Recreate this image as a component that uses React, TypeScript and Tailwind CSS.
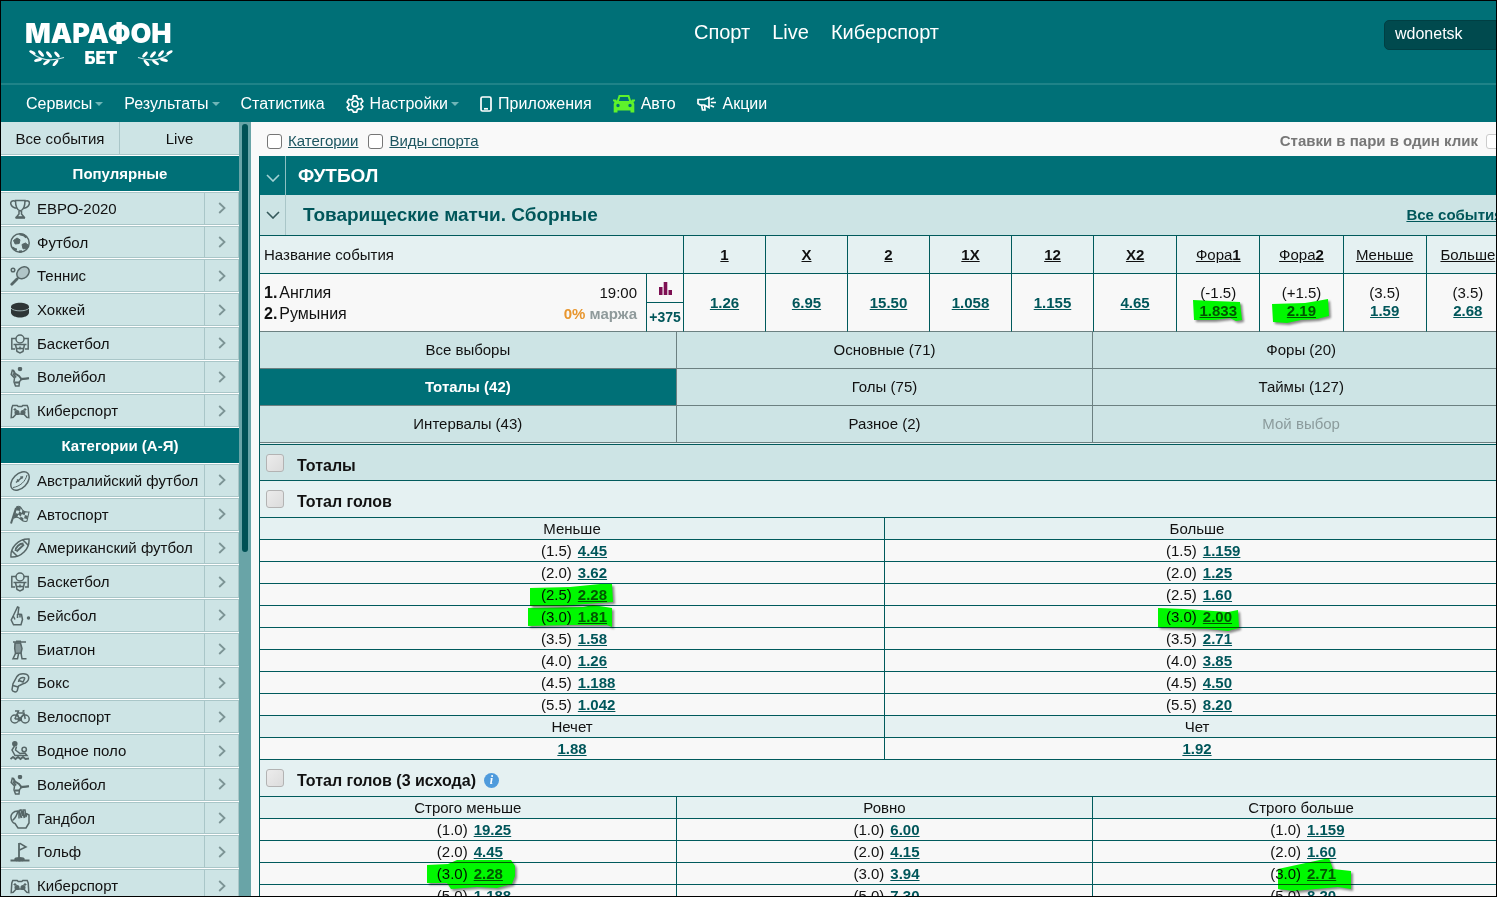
import { useState, type ReactNode } from 'react';
import clsx from 'clsx';

/* ---------- Data ---------- */

const TOP_LINKS = ['Спорт', 'Live', 'Киберспорт'];

const POPULAR = [
  { icon: 'cup', label: 'ЕВРО-2020' },
  { icon: 'football', label: 'Футбол' },
  { icon: 'tennis', label: 'Теннис' },
  { icon: 'puck', label: 'Хоккей' },
  { icon: 'basketball', label: 'Баскетбол' },
  { icon: 'volleyball', label: 'Волейбол' },
  { icon: 'gamepad', label: 'Киберспорт' },
];

const CATEGORIES = [
  { icon: 'rugby', label: 'Австралийский футбол' },
  { icon: 'flag', label: 'Автоспорт' },
  { icon: 'american', label: 'Американский футбол' },
  { icon: 'basketball', label: 'Баскетбол' },
  { icon: 'baseball', label: 'Бейсбол' },
  { icon: 'biathlon', label: 'Биатлон' },
  { icon: 'boxing', label: 'Бокс' },
  { icon: 'bike', label: 'Велоспорт' },
  { icon: 'waterpolo', label: 'Водное поло' },
  { icon: 'volleyball', label: 'Волейбол' },
  { icon: 'handball', label: 'Гандбол' },
  { icon: 'golf', label: 'Гольф' },
  { icon: 'gamepad', label: 'Киберспорт' },
];

const MARKET_TABS = [
  'Все выборы',
  'Основные (71)',
  'Форы (20)',
  'Тоталы (42)',
  'Голы (75)',
  'Таймы (127)',
  'Интервалы (43)',
  'Разное (2)',
  'Мой выбор',
];

type Odd = { handicap?: string; value: string; mark?: string };

// mark = outline of the marker stroke, drawn over the value
const EVENT_ODDS: Odd[] = [
  { value: '1.26' },
  { value: '6.95' },
  { value: '15.50' },
  { value: '1.058' },
  { value: '1.155' },
  { value: '4.65' },
  { handicap: '(-1.5)', value: '1.833', mark: '9,6 30,7 56,8 58,26 52,27 46,24 30,26 10,26' },
  { handicap: '(+1.5)', value: '2.19', mark: '1,10 34,9 46,7 57,5 58,22 46,25 30,26 16,29 2,28' },
  { handicap: '(3.5)', value: '1.59' },
  { handicap: '(3.5)', value: '2.68' },
];

const TOTALS: Odd[][] = [
  [{ handicap: '(1.5)', value: '4.45' }, { handicap: '(1.5)', value: '1.159' }],
  [{ handicap: '(2.0)', value: '3.62' }, { handicap: '(2.0)', value: '1.25' }],
  [
    { handicap: '(2.5)', value: '2.28', mark: '5,11 45,10 75,7 87,7 88,25 60,27 37,29 5,29' },
    { handicap: '(2.5)', value: '1.60' },
  ],
  [
    { handicap: '(3.0)', value: '1.81', mark: '3,9 58,8 68,6 87,9 87,28 82,26 45,26 3,27' },
    { handicap: '(3.0)', value: '2.00', mark: '8,9 34,10 78,13 88,11 89,29 78,32 58,30 8,28' },
  ],
  [{ handicap: '(3.5)', value: '1.58' }, { handicap: '(3.5)', value: '2.71' }],
  [{ handicap: '(4.0)', value: '1.26' }, { handicap: '(4.0)', value: '3.85' }],
  [{ handicap: '(4.5)', value: '1.188' }, { handicap: '(4.5)', value: '4.50' }],
  [{ handicap: '(5.5)', value: '1.042' }, { handicap: '(5.5)', value: '8.20' }],
];

const TOTALS_3WAY: Odd[][] = [
  [
    { handicap: '(1.0)', value: '19.25' },
    { handicap: '(1.0)', value: '6.00' },
    { handicap: '(1.0)', value: '1.159' },
  ],
  [
    { handicap: '(2.0)', value: '4.45' },
    { handicap: '(2.0)', value: '4.15' },
    { handicap: '(2.0)', value: '1.60' },
  ],
  [
    { handicap: '(3.0)', value: '2.28', mark: '6,9 27,8 36,4 90,4 94,10 94,20 91,28 76,32 56,31 30,33 26,27 6,27' },
    { handicap: '(3.0)', value: '3.94' },
    { handicap: '(3.0)', value: '2.71', mark: '24,13 47,8 75,2 79,13 97,15 97,33 84,31 40,35 24,33' },
  ],
  [
    { handicap: '(5.0)', value: '1.188' },
    { handicap: '(5.0)', value: '7.30' },
    { handicap: '(5.0)', value: '8.20' },
  ],
];

/* ---------- Icons ---------- */

const SPORT_ICONS: Record<string, ReactNode> = {
  cup: (
    <>
      <path d="M5.500 1.500h9.500c0 6-1.500 9.500-4.800 10.500C6.800 11 5.500 7.500 5.500 1.500z" />
      <path d="M5.500 2.200C2 .8.2 3 .9 5.200c.8 2.600 3 3.600 5.700 4M15 2.200c3.500-1.400 4.900.8 4.200 3-.8 2.600-3 3.600-5.400 4" />
      <path d="M9 12v3l-2.500 3h7.500L11.500 15v-3" />
      <path d="M5.500 18.800h9.500" strokeWidth="2" />
    </>
  ),
  football: (
    <>
      <circle cx="10" cy="10" r="9.200" />
      <path d="M3.500 7.500L7 5l3 1.800-.8 3.700-4 .5zM12 11.500l3.500-1.500 2.500 2-1.200 3.500-3.800.3z" fill="currentColor" strokeWidth="1" />
      <path d="M9.500 1.500c3-.2 5.500 1 7 3M2.500 14.500c1.500 1.500 3 2 4.500 2M9 18.500l3-.2" strokeWidth="2.200" />
    </>
  ),
  tennis: (
    <>
      <ellipse cx="13" cy="6.800" rx="6.800" ry="5.300" transform="rotate(-42 13 6.800)" fill="#b0c5c7" />
      <path d="M8.500 11.500l-2 2" />
      <path d="M7 13L1.800 18.200" strokeWidth="2.800" strokeLinecap="round" />
      <circle cx="3" cy="4" r="1.800" />
    </>
  ),
  puck: (
    <g fill="#2e3536" stroke="none">
      <path d="M1 6.500c1.500-5 16.500-5 18 0V13c-1.500 6-16.500 6-18 0z" />
      <path d="M1 8c2 3.800 16 3.800 18 0" fill="none" stroke="#9db0b2" strokeWidth="1" />
    </g>
  ),
  basketball: (
    <>
      <path d="M6 4.500H1.800v10.500H5M14 4.500h4.200v10.500H15" />
      <circle cx="10" cy="5" r="4" />
      <path d="M3.500 10.500h13M5.500 10.500l1.500 7 3 1.500 3-1.500 1.500-7M6.500 14.500h7M10 12.500v3" />
    </>
  ),
  volleyball: (
    <>
      <circle cx="10" cy="2" r="1.500" fill="currentColor" />
      <path d="M2.500 2.500L1.200 7.500 4.500 11 4 15l1.500 4h3.500l.5-4.500 2-2 7.500-1.200" />
      <path d="M3 3l2 3.500L9 9l2 2.500" strokeWidth="2" />
      <path d="M3 6.500l3 4M5 15.500h4M10 12l9-.8" strokeWidth="2" />
    </>
  ),
  gamepad: (
    <>
      <path d="M2.800 4.500h4.400l1 1h3.600l1-1h4.400l1 2.500.6 9.500-2-.3-3-3.200H6.200l-3 3.200-2 .3L1.800 7z" />
      <circle cx="7" cy="11.500" r="1.800" fill="currentColor" />
      <circle cx="13" cy="11.500" r="1.800" fill="currentColor" />
      <path d="M3.500 8.500h3M5 7v3M13.500 8.500h3M15 7v3" strokeWidth="1.100" />
    </>
  ),
  rugby: (
    <>
      <ellipse cx="10" cy="10" rx="11" ry="7" transform="rotate(-45 10 10)" />
      <path d="M6 11.500L13 5.500M7 8.500l2 2M10.500 5.500l2 2" />
      <path d="M3 16.500C10 15.500 15.500 10.500 17 4" strokeWidth="1" />
    </>
  ),
  flag: (
    <>
      <path d="M6 3L1 18.500" strokeWidth="2" />
      <path d="M6.500 2c3-2 4.500.5 6 3s4 2 6.500 2l-2 9c-3 1.500-5-.5-6.500-2S7 11.500 4 13z" strokeWidth="1.100" />
      <g fill="currentColor" stroke="none">
        <path d="M7 1.500l4 1-1 3.500-4-.8zM12.500 5.500l3 1.800-1 3-3.200-1.500zM9.500 6l2.500 2.500-1.200 3L8 9.500zM5.500 8l3 1-1.200 3.200-3 .3zM15 10l3 1-1 3-3-.8zM10.500 11.500l3 1.800L13 16l-3-2.500z" />
      </g>
    </>
  ),
  american: (
    <>
      <path d="M1 19C0 10 8 .5 19 1c.8 10-8 18.500-18 18z" />
      <path d="M1.500 12.500l6 6M12.500 1.500l6 6" />
      <path d="M5.500 13c0-4 4-7.500 8-7.500M6.500 13.500L14 6.500" strokeWidth="1.800" />
    </>
  ),
  baseball: (
    <>
      <path d="M3.500 18.800L1.200 14l2-4L7.500 1l1.300.5-.8 6.500 3.500.5 1 5-1.500 5.300z" />
      <path d="M3.200 10l1.800 3.500M7.500 8v4M10 8.500v3" />
      <circle cx="18.500" cy="12" r="1" fill="currentColor" />
    </>
  ),
  biathlon: (
    <>
      <path d="M3 2h13M6 1.200h5" />
      <path d="M5 3h5.500l1.500 5.500-1 4.500-5.500.5-.8-5z" fill="currentColor" fillOpacity=".6" />
      <path d="M5.500 13.500L3 18.800h4.500l1-5M11 13l1 5.800h4.500" />
    </>
  ),
  boxing: (
    <>
      <path d="M8.500 13l-1.200 4.500c-1 2.300-5 1.500-5.300-.8l1-6 4-7.200C9.500-.2 17 0 18.500 3.500c1 4-2.500 7-6 7.500z" />
      <path d="M15 5c-3-1.500-6.500.8-6.500 4M9 7.500l4 1.500 2-4M3 12.500l5 1.500" />
    </>
  ),
  bike: (
    <>
      <circle cx="4.800" cy="12" r="4" />
      <circle cx="15.200" cy="12" r="4" />
      <path d="M4.800 12L7.500 6h6.500l1.200 6M7 6.500l2.500 5.500L14 7M9.500 12H4.800M5 4h3.500l-.8 2M12.500 4.500l2-1" />
      <circle cx="9.500" cy="12.500" r="1.200" fill="currentColor" />
    </>
  ),
  waterpolo: (
    <>
      <circle cx="4.800" cy="2.800" r="2" fill="currentColor" />
      <path d="M4.500 5L2 9l3 5.500h12l-2-2.500-5 .5L5.500 9l1-3.500" />
      <circle cx="14.200" cy="8.500" r="2.200" />
      <path d="M.5 18l2.500-2 2.500 2L8 16l2.500 2 2.500-2 2.500 2 3.500-.5" strokeWidth="1.800" />
    </>
  ),
  handball: (
    <>
      <path d="M8 2C3 2 .5 5.500 1 9c.4 3 2 5 4 5.500l3 4.500h8l3-5V6l-2-1" />
      <path d="M8 2C7 6 5 9.500 2.500 11.500M9 9.500V1.500l2-.7 1.500 6.200.5-6h2l1 7 .8-4" />
      <path d="M9 2l2.500 7M13 2l1.500 7" strokeWidth="2" />
    </>
  ),
  golf: (
    <>
      <path d="M9 1v16" strokeWidth="1.800" />
      <path d="M9.500 1.200L16 5l-6.500 3" />
      <path d="M.5 18.500h6l3-1.500 3 1.500h7" strokeWidth="1.800" />
      <ellipse cx="9.500" cy="17.300" rx="4.500" ry="1.600" fill="currentColor" />
    </>
  ),
};

function SportIcon({ name }: { name: string }) {
  return (
    <svg viewBox="0 0 20 20" className="size-5 shrink-0 text-[#566667]" fill="none" stroke="currentColor" strokeWidth="1.5" aria-hidden="true">
      {SPORT_ICONS[name]}
    </svg>
  );
}

function Caret() {
  return (
    <svg viewBox="0 0 8 4" className="ml-[3px] h-1 w-2" aria-hidden="true">
      <path d="M0 0h8L4 4z" fill="#6fb5b7" />
    </svg>
  );
}

function Laurel({ flip }: { flip?: boolean }) {
  return (
    <svg viewBox="0 0 36 16" className={clsx('h-4 w-9', flip && '-scale-x-100')} aria-hidden="true">
      <path d="M4 4C12 10 22 12 35 7.500" fill="none" stroke="#cfe9ea" strokeWidth="1.200" />
      <g fill="#fff">
        <ellipse cx="3.500" cy="2.500" rx="3.500" ry="1.400" transform="rotate(30 3.500 2.500)" />
        <ellipse cx="12" cy="3.500" rx="4" ry="1.600" transform="rotate(50 12 3.500)" />
        <ellipse cx="20" cy="4.500" rx="4" ry="1.600" transform="rotate(50 20 4.500)" />
        <ellipse cx="28" cy="4.500" rx="3.700" ry="1.500" transform="rotate(50 28 4.500)" />
        <ellipse cx="9" cy="10" rx="4" ry="1.600" transform="rotate(-15 9 10)" />
        <ellipse cx="17.500" cy="12.500" rx="4" ry="1.600" transform="rotate(-35 17.500 12.500)" />
        <ellipse cx="26.500" cy="13" rx="4" ry="1.500" transform="rotate(-50 26.500 13)" />
      </g>
    </svg>
  );
}

function ChevronDown({ className }: { className: string }) {
  return (
    <svg viewBox="0 0 14 8" className={clsx('h-2 w-3.5', className)} fill="none" stroke="currentColor" strokeWidth="1.6" aria-hidden="true">
      <path d="M1 1l6 6 6-6" />
    </svg>
  );
}

/* ---------- Header ---------- */

function Header() {
  return (
    <header className="shrink-0 bg-[#007077] text-white">
      <div className="flex h-[82px] items-start overflow-hidden">
        <a href="#" className="flex w-[248px] shrink-0 flex-col pt-[17px] pl-6">
          <span className="font-[Inter,sans-serif] text-[27px] leading-8 font-black">МАРАФОН</span>
          <span className="flex w-[152px] items-center justify-between px-1">
            <Laurel />
            <span className="font-[Inter,sans-serif] text-[17px] leading-4 font-black">БЕТ</span>
            <Laurel flip />
          </span>
        </a>
        <nav className="flex flex-1 justify-center gap-[22px] pt-[17px] text-xl leading-7">
          {TOP_LINKS.map(link => (
            <a key={link} href="#">{link}</a>
          ))}
        </nav>
        <button className="mt-[19px] -mr-1 h-[30px] w-[116px] rounded-[5px] border border-[#003f43] bg-[#004a4e] pb-0.5 pl-2.5 text-left text-base">
          wdonetsk
        </button>
      </div>
      <nav className="flex h-[39px] items-center gap-[21px] border-t-2 border-[#1f8388] pl-[25px] text-base whitespace-nowrap">
        <a href="#" className="flex items-center">Сервисы<Caret /></a>
        <a href="#" className="flex items-center">Результаты<Caret /></a>
        <a href="#">Статистика</a>
        <a href="#" className="flex items-center">
          <svg viewBox="0 0 24 24" className="mr-1.5 size-[18px]" fill="none" stroke="currentColor" strokeWidth="2.2" strokeLinejoin="round" aria-hidden="true">
            <path d="M9.700 2h4.600l.7 3.200 2 1.200 3.200-1 2.300 4-2.400 2.200v2.400l2.400 2.200-2.300 4-3.200-1-2 1.200-.7 3.200H9.700L9 21.400l-2-1.200-3.200 1-2.300-4L3.900 15v-2.400L1.500 10.400l2.300-4 3.200 1 2-1.200z" transform="translate(0 -.8)" />
            <circle cx="12" cy="12" r="4" />
          </svg>
          Настройки<Caret />
        </a>
        <a href="#" className="flex items-center">
          <svg viewBox="0 0 12 16" className="mr-1.5 h-4 w-3" fill="none" stroke="currentColor" strokeWidth="1.700" aria-hidden="true">
            <rect x="1" y="1" width="10" height="14" rx="1.500" />
            <path d="M4 12.800h4" />
          </svg>
          Приложения
        </a>
        <a href="#" className="flex items-center">
          <svg viewBox="0 0 22 20" className="mr-1.5 h-5 w-[22px] text-[#5ef22b]" aria-hidden="true">
            <path d="M4.500 8l2-6h9l2 6" fill="none" stroke="currentColor" strokeWidth="2" />
            <path fill="currentColor" fillRule="evenodd" d="M0 5.500h3l1 1.500h14l1-1.500h3v1.500l-1.500 1 .8 2v8.500h-3.800V16.500h-13v2H.7V10l.8-2L0 7zM5 9.800a1.700 1.700 0 100 3.400 1.700 1.700 0 000-3.400zm12 0a1.700 1.700 0 100 3.400 1.700 1.700 0 000-3.400z" />
          </svg>
          Авто
        </a>
        <a href="#" className="flex items-center">
          <svg viewBox="0 0 20 16" className="mr-1.5 h-4 w-5" fill="none" stroke="currentColor" strokeWidth="1.700" aria-hidden="true">
            <path d="M1 3.500h6.500L12 1.500v10L7.500 9H3L1 7.500zM4.500 9l1 5h2.500L7.500 9" />
            <path d="M14 6.500h5M13.500 3.500l3.500-1.500M13.500 9.500L17 11" />
          </svg>
          Акции
        </a>
      </nav>
    </header>
  );
}

/* ---------- Sidebar ---------- */

function SportList({ items, className }: { items: { icon: string; label: string }[]; className: string }) {
  return (
    <ul className={clsx('flex flex-col', className)}>
      {items.map(item => (
        <li key={item.label} className="flex-1 border-b border-white">
          <a href="#" className="flex h-full items-stretch border-y border-[#a9c6c8] bg-[#cde4e5]">
            <span className="flex flex-1 items-center gap-[7px] pt-px pl-[9px] whitespace-nowrap">
              <SportIcon name={item.icon} />
              {item.label}
            </span>
            <span className="flex w-[35px] items-center justify-center border-x border-[#a9c6c8]">
              <svg viewBox="0 0 8 12" className="h-3 w-2" fill="none" stroke="#7c9495" strokeWidth="1.800" aria-hidden="true">
                <path d="M1.200 1l5.300 5-5.300 5" />
              </svg>
            </span>
          </a>
        </li>
      ))}
    </ul>
  );
}

function Sidebar() {
  return (
    <aside className="flex w-[250px] shrink-0 overflow-hidden">
      <div className="flex-1 bg-white">
        <div className="grid h-[33px] grid-cols-2 border-b border-[#a9c6c8] bg-[#cde4e5]">
          <button className="border-r border-[#a9c6c8] pt-0.5">Все события</button>
          <button className="pt-0.5">Live</button>
        </div>
        <h2 className="mt-px mb-px flex h-[35px] items-center justify-center bg-[#007077] font-bold text-white">Популярные</h2>
        <SportList items={POPULAR} className="h-[236px]" />
        <h2 className="mb-px flex h-[35px] items-center justify-center bg-[#007077] font-bold text-white">Категории (А-Я)</h2>
        <SportList items={CATEGORIES} className="h-[439px]" />
      </div>
      {/* scroll track */}
      <div className="w-3 bg-[#69a4a7] px-[3px] pt-0.5">
        <div className="h-[428px] rounded-full bg-[#005155]" />
      </div>
    </aside>
  );
}

/* ---------- Markets ---------- */

function Marker({ points }: { points: string }) {
  return (
    <svg viewBox="0 0 100 36" className="pointer-events-none absolute -top-2 -left-4 h-9 w-[100px] max-w-none overflow-visible mix-blend-multiply drop-shadow-[2px_2px_1px_rgba(0,0,0,0.45)]" aria-hidden="true">
      <polygon points={points} fill="#00ff00" />
    </svg>
  );
}

function OddLink({ value }: { value: string }) {
  return <a href="#" className="font-bold text-[#00565a] underline underline-offset-1">{value}</a>;
}

function BigCheckbox({ label, children }: { label: string; children?: ReactNode }) {
  return (
    <div className="flex h-full items-center">
      <label className="flex items-center gap-[13px] pl-1.5 text-base font-bold">
        <input type="checkbox" className="size-[18px] appearance-none rounded-[3px] border border-[#b3b3b3] bg-linear-to-br from-[#ececec] to-[#dcdcdc]" />
        <span className="pt-1.5">{label}</span>
      </label>
      {children}
    </div>
  );
}

function MarketHead({ titles }: { titles: string[] }) {
  return (
    <tr className="h-[22px]">
      {titles.map(title => (
        <th key={title} className="border-r border-b border-[#005a5c] bg-[#e5f1f2] p-0 font-normal">{title}</th>
      ))}
    </tr>
  );
}

function MarketRows({ rows }: { rows: Odd[][] }) {
  return rows.map((row, i) => (
    <tr key={i} className="h-[22px]">
      {row.map((odd, j) => (
        <td key={j} className="border-r border-b border-[#005a5c] bg-[#f8f8f8] p-0">
          <div className="relative mx-auto flex w-[62px] gap-[6px] whitespace-nowrap">
            <span>{odd.handicap}</span>
            <OddLink value={odd.value} />
            {odd.mark && <Marker points={odd.mark} />}
          </div>
        </td>
      ))}
    </tr>
  ));
}

function EventTable() {
  const head = 'border-r border-b border-[#005a5c] bg-[#e5f1f2] p-0';
  const cell = 'border-r border-b border-r-[#005a5c] border-b-[#6c8081] bg-[#f8f8f8] p-0';
  return (
    <table className="w-full table-fixed border-separate border-spacing-0 text-center">
      <colgroup>
        <col className="w-[387px]" />
        <col className="w-[37px]" />
        <col span={5} className="w-[82px]" />
        <col span={5} />
      </colgroup>
      <thead>
        <tr className="h-[38px]">
          <th colSpan={2} className={clsx(head, 'pl-1 text-left font-normal')}>Название события</th>
          {['1', 'X', '2', '1X', '12', 'X2'].map(name => (
            <th key={name} className={head}><a href="#" className="underline underline-offset-1">{name}</a></th>
          ))}
          {['1', '2'].map(n => (
            <th key={n} className={clsx(head, 'font-normal')}>
              <a href="#" className="underline underline-offset-1">Фора<b>{n}</b></a>
            </th>
          ))}
          {['Меньше', 'Больше'].map(name => (
            <th key={name} className={clsx(head, 'font-normal')}><a href="#" className="underline underline-offset-1">{name}</a></th>
          ))}
        </tr>
      </thead>
      <tbody>
        <tr className="h-[58px]">
          <td className={clsx(cell, 'pr-[9px] pl-1')}>
            <div className="flex justify-between leading-[21px]">
              <div className="text-left text-base leading-[21px]">
                <div className="flex gap-0.5"><b>1.</b><span>Англия</span></div>
                <div className="flex gap-0.5"><b>2.</b><span>Румыния</span></div>
              </div>
              <div className="text-right">
                <div>19:00</div>
                <div className="font-bold text-[#8f9a9b]"><span className="text-[#e8962e]">0%</span> маржа</div>
              </div>
            </div>
          </td>
          <td className={cell}>
            <div className="flex h-[57px] flex-col">
              <button className="flex h-[29px] items-center justify-center border-b border-[#005a5c]" aria-label="Статистика матча">
                <svg viewBox="0 0 13 13" className="size-[13px]" fill="#7d0f52" aria-hidden="true">
                  <path d="M0 5h3.500v8H0zM4.700 0h3.600v13H4.700zM9.500 8H13v5H9.500z" />
                </svg>
              </button>
              <a href="#" className="flex flex-1 items-center justify-center text-sm font-bold text-[#00565a]">+375</a>
            </div>
          </td>
          {EVENT_ODDS.map((odd, i) => (
            <td key={i} className={cell}>
              {odd.handicap && <div className="leading-4">{odd.handicap}</div>}
              <div className="relative inline-block leading-[17px]">
                <OddLink value={odd.value} />
                {odd.mark && <Marker points={odd.mark} />}
              </div>
            </td>
          ))}
        </tr>
      </tbody>
    </table>
  );
}

function Coupon() {
  const [tab, setTab] = useState('Тоталы (42)');

  return (
    <section className="border-l border-[#005a5c]">
      <div className="flex h-[39px] items-stretch bg-[#007077] text-white">
        <button className="flex w-[26px] items-center justify-center border-r border-[#8cc0c2] pt-1" aria-label="Свернуть футбол">
          <ChevronDown className="text-[#a5d3d5]" />
        </button>
        <h1 className="flex items-center pl-3 text-[19px] font-bold">ФУТБОЛ</h1>
      </div>
      <div className="flex h-[41px] items-stretch border-b border-[#005a5c] bg-[#cde4e5] text-[#00565a]">
        <button className="flex w-[26px] items-center justify-center border-r border-[#a9c6c8]" aria-label="Свернуть турнир">
          <ChevronDown className="text-[#35595b]" />
        </button>
        <h2 className="flex flex-1 items-center pl-[17px] text-[19px] font-bold">Товарищеские матчи. Сборные</h2>
        <a href="#" className="self-center pr-[7px] font-bold underline underline-offset-1">Все события</a>
      </div>

      <EventTable />

      <div className="grid grid-cols-3 border-b border-[#005a5c] bg-[#e5f1f2] pb-px">
        {MARKET_TABS.map(name => (
          <button
            key={name}
            onClick={() => setTab(name)}
            disabled={name === 'Мой выбор'}
            className={clsx(
              'h-[37px] border-r border-b border-[#6c8081] disabled:text-[#8b9b9c]',
              tab === name ? 'bg-[#007077] font-bold text-white' : 'bg-[#cde4e5]'
            )}
          >
            {name}
          </button>
        ))}
      </div>

      <div className="h-9 border-b border-[#005a5c] bg-[#cde4e5]">
        <BigCheckbox label="Тоталы" />
      </div>

      <div className="h-[37px] border-b border-[#005a5c] bg-[#e5f1f2]">
        <BigCheckbox label="Тотал голов" />
      </div>
      <table className="w-full table-fixed border-separate border-spacing-0 text-center">
        <tbody>
          <MarketHead titles={['Меньше', 'Больше']} />
          <MarketRows rows={TOTALS} />
          <MarketHead titles={['Нечет', 'Чет']} />
          <tr className="h-[22px]">
            {['1.88', '1.92'].map(value => (
              <td key={value} className="border-r border-b border-[#005a5c] bg-[#f8f8f8] p-0"><OddLink value={value} /></td>
            ))}
          </tr>
        </tbody>
      </table>

      <div className="h-[37px] border-b border-[#005a5c] bg-[#e5f1f2]">
        <BigCheckbox label="Тотал голов (3 исхода)">
          <button className="mt-1 ml-2 size-[15px] rounded-full bg-[#4f9bdc] font-[Liberation_Serif,serif] text-xs leading-[15px] font-bold text-white italic" aria-label="Подробнее">
            i
          </button>
        </BigCheckbox>
      </div>
      <table className="w-full table-fixed border-separate border-spacing-0 text-center">
        <tbody>
          <MarketHead titles={['Строго меньше', 'Ровно', 'Строго больше']} />
          <MarketRows rows={TOTALS_3WAY} />
        </tbody>
      </table>
    </section>
  );
}

/* ---------- Page ---------- */

export default function App() {
  const checkbox = 'size-[15px] appearance-none rounded-[3px] border bg-white';
  return (
    <div className="flex h-screen flex-col overflow-hidden border border-black bg-[#f9f9f9] font-[Liberation_Sans,Arial,sans-serif] text-[15px] leading-5 text-[#111]">
      <Header />
      <div className="flex min-h-0 flex-1">
        <Sidebar />
        <main className="min-w-0 flex-1 overflow-hidden pl-2">
          {/* the coupon is a little wider than the viewport and gets cut on the right */}
          <div className="-mr-[14px]">
            <div className="flex h-[34px] items-center justify-between pt-1 pr-[9px] pl-2">
              <div className="flex items-center gap-2.5">
                <label className="flex items-center gap-1.5 text-[#1d5560] underline underline-offset-1">
                  <input type="checkbox" className={clsx(checkbox, 'border-[#767676]')} />
                  Категории
                </label>
                <label className="flex items-center gap-1.5 text-[#1d5560] underline underline-offset-1">
                  <input type="checkbox" className={clsx(checkbox, 'border-[#767676]')} />
                  Виды спорта
                </label>
              </div>
              <label className="flex items-center gap-2 font-bold text-[#777]">
                Ставки в пари в один клик
                <input type="checkbox" className={clsx(checkbox, 'border-[#ccc]')} />
              </label>
            </div>
            <Coupon />
          </div>
        </main>
      </div>
    </div>
  );
}
